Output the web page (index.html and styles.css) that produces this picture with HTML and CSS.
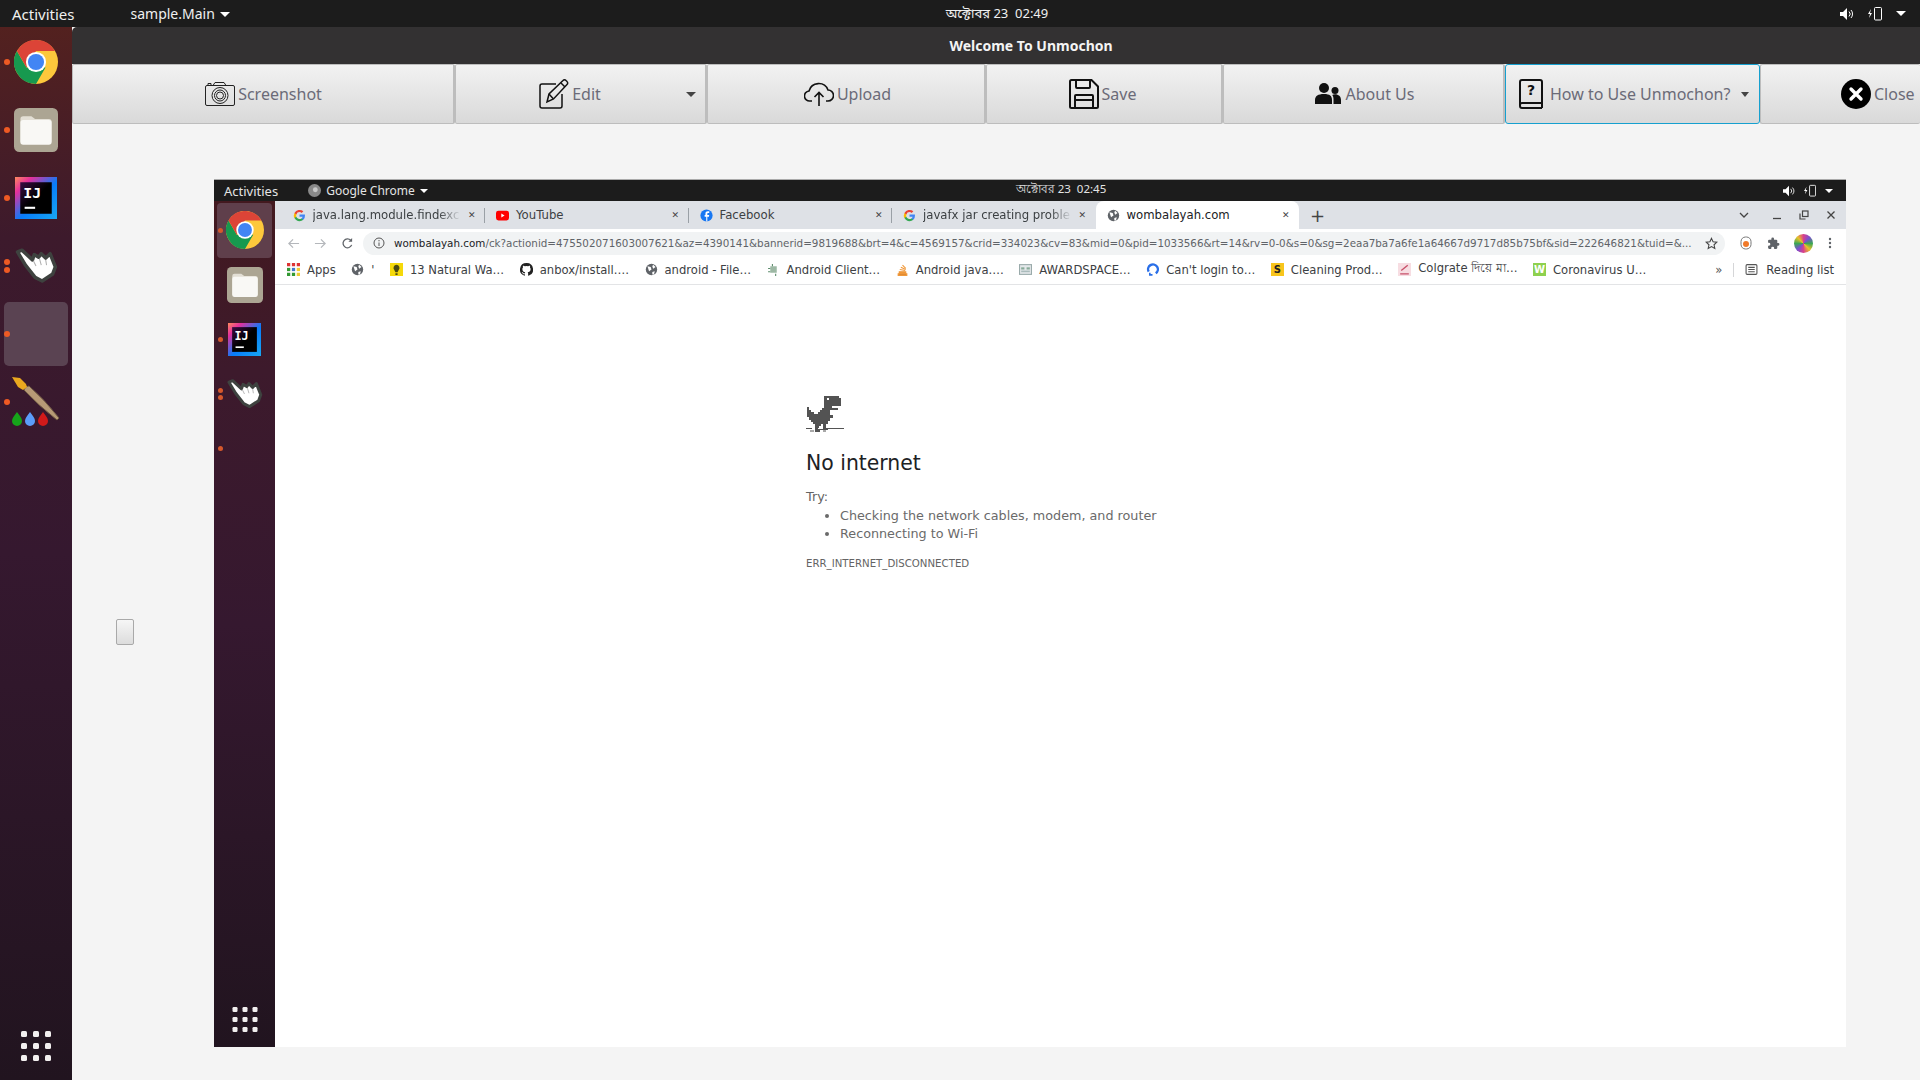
FILE: index.html
```html
<!DOCTYPE html>
<html lang="en">
<head>
    <meta charset="UTF-8">
    <title>Welcome To Unmochon</title>
    <link rel="stylesheet" href="styles.css">
</head>
<body>

<svg class="defs" width="0" height="0">
    <defs>
        <symbol id="chrome" viewBox="0 0 48 48">
            <circle cx="24" cy="24" r="24" fill="#fdc83c"/>
            <path d="M3.2 12 13.600 30H34.400L24 48A24 24 0 0 1 3.200 12Z" fill="#17994f"/>
            <path d="M3.200 12A24 24 0 0 1 44.800 12H24L13.600 30Z" fill="#dc4437"/>
            <circle cx="24" cy="24" r="11" fill="#fff"/>
            <circle cx="24" cy="24" r="8.800" fill="#4285f4"/>
        </symbol>
        <symbol id="files" viewBox="0 0 48 48">
            <rect width="48" height="48" rx="6" fill="#aca593"/>
            <path d="M7 12a3 3 0 0 1 3-3h9l4 3h15a3 3 0 0 1 3 3v21a3 3 0 0 1-3 3H10a3 3 0 0 1-3-3Z" fill="#e3dfd5"/>
            <path d="M7 16a3 3 0 0 1 3-3h28a3 3 0 0 1 3 3v21a3 3 0 0 1-3 3H10a3 3 0 0 1-3-3Z" fill="#f9f8f5"/>
        </symbol>
        <symbol id="idea" viewBox="0 0 48 48">
            <defs>
                <linearGradient id="ideaEdge" x1="0" y1="0" x2="1" y2="1">
                    <stop offset="0" stop-color="#fe8a5d"/>
                    <stop offset=".2" stop-color="#e5309c"/>
                    <stop offset=".55" stop-color="#087cfa"/>
                    <stop offset="1" stop-color="#18a8f2"/>
                </linearGradient>
                <linearGradient id="ideaCore" x1="0" y1="0" x2="1" y2="1">
                    <stop offset="0" stop-color="#3a0b44"/>
                    <stop offset=".5" stop-color="#000"/>
                </linearGradient>
            </defs>
            <rect width="48" height="48" fill="url(#ideaEdge)"/>
            <rect x="6" y="6" width="36" height="36" fill="url(#ideaCore)"/>
            <text x="9.500" y="24" class="ij-text">IJ</text>
            <rect x="11" y="34" width="12" height="2.400" fill="#fff"/>
        </symbol>
        <symbol id="hand" viewBox="0 0 50 42">
            <path d="M4 5 9 3 21 14 23 8 28 11 31 7 36 12 41 7 47 22 44 30 32 38 24 34 13 20Z" fill="#fff" stroke="#3e423f" stroke-width="4" stroke-linejoin="round"/>
            <path d="M22 15 25 21M29 13 31 20M36 14 37 20" stroke="#b0b0b0" stroke-width="1.200" fill="none"/>
        </symbol>
        <symbol id="globe" viewBox="0 0 16 16">
            <circle cx="8" cy="8" r="7" fill="#5f6368"/>
            <path d="M3 4 7 5 8 8 5 10 4 7ZM10 2 13 5 10 7 9 4ZM9 11 12 10 11 14 9 14Z" fill="#fff"/>
        </symbol>
        <symbol id="g-logo" viewBox="0 0 16 16">
            <path d="M14.700 8.200c0-.5 0-1-.1-1.400H8v2.700h3.800a3.200 3.200 0 0 1-1.400 2.100v1.700h2.300a6.800 6.800 0 0 0 2-5.100Z" fill="#4285f4"/>
            <path d="M8 15c1.900 0 3.400-.6 4.700-1.700l-2.300-1.700a4.200 4.200 0 0 1-6.300-2.200H1.800v1.800A7 7 0 0 0 8 15Z" fill="#34a853"/>
            <path d="M4.100 9.400a4.200 4.200 0 0 1 0-2.700V4.900H1.800a7 7 0 0 0 0 6.300Z" fill="#fbbc05"/>
            <path d="M8 3.800c1 0 2 .4 2.700 1.100l2-2A7 7 0 0 0 1.800 4.900l2.300 1.800A4.200 4.200 0 0 1 8 3.800Z" fill="#ea4335"/>
        </symbol>
    </defs>
</svg>

<div class="topbar">
    <div class="topbar-left">
        <span class="activities">Activities</span>
        <span class="app-menu">sample.Main <i class="caret"></i></span>
    </div>
    <div class="clock">অক্টোবর 23&nbsp; 02:49</div>
    <div class="tray">
        <svg width="14" height="14" viewBox="0 0 14 14"><path d="M0 5h3l4-4v12L3 9H0Z" fill="#fff"/><path d="M9 4.500a3.500 3.500 0 0 1 0 5M11 3a6 6 0 0 1 0 8" stroke="#fff" fill="none"/></svg>
        <svg width="14" height="15" viewBox="0 0 14 15"><path d="M3 3 0 8h2l-1 4 3-5H2Z" fill="#fff"/><rect x="6.500" y="1.500" width="7" height="12.500" rx="1" fill="none" stroke="#fff"/></svg>
        <i class="caret"></i>
    </div>
</div>

<div class="desktop">
    <nav class="dock">
        <div class="dock-item"><i class="dot"></i><svg class="dock-icon"><use href="#chrome"/></svg></div>
        <div class="dock-item"><i class="dot"></i><svg class="dock-icon"><use href="#files"/></svg></div>
        <div class="dock-item"><i class="dot"></i><svg class="dock-icon idea-icon"><use href="#idea"/></svg></div>
        <div class="dock-item"><i class="dot double"></i><svg class="dock-icon"><use href="#hand"/></svg></div>
        <div class="dock-item"><i class="dot"></i><div class="dock-active"></div></div>
        <div class="dock-item"><i class="dot"></i>
            <svg class="dock-icon paint" viewBox="0 0 48 50">
                <path d="M12 13Q13 9 17 9 32 22 47 41L45 43Q26 28 12 13Z" fill="#b79a76" stroke="#6f5a43"/>
                <path d="M0 0 8 1 14 7 15 10 11 13 6 10Z" fill="#eaa81f"/>
                <path d="M5 35c3 4 5 6 5 9a5 5 0 0 1-10 0c0-3 2-5 5-9Z" fill="#16a31a"/>
                <path d="M18 35c3 4 5 6 5 9a5 5 0 0 1-10 0c0-3 2-5 5-9Z" fill="#5b9dfa"/>
                <path d="M31 35c3 4 5 6 5 9a5 5 0 0 1-10 0c0-3 2-5 5-9Z" fill="#d11a1a"/>
            </svg>
        </div>
        <div class="dock-spacer"></div>
        <svg class="apps-grid" viewBox="0 0 30 30"><g fill="#f2efef">
            <rect x="0" y="0" width="6" height="6" rx="1.500"/><rect x="12" y="0" width="6" height="6" rx="1.500"/><rect x="24" y="0" width="6" height="6" rx="1.500"/>
            <rect x="0" y="12" width="6" height="6" rx="1.500"/><rect x="12" y="12" width="6" height="6" rx="1.500"/><rect x="24" y="12" width="6" height="6" rx="1.500"/>
            <rect x="0" y="24" width="6" height="6" rx="1.500"/><rect x="12" y="24" width="6" height="6" rx="1.500"/><rect x="24" y="24" width="6" height="6" rx="1.500"/>
        </g></svg>
    </nav>

    <main class="window">
        <div class="titlebar">Welcome To Unmochon</div>

        <div class="toolbar">
            <button class="tool tool-shot">
                <svg width="30" height="24" viewBox="0 0 30 24" fill="none" stroke="#222" stroke-width="1"><rect x=".5" y="3.500" width="29" height="20" rx="1.500"/><path d="M8 3.500 10 .5h9l2 3"/><circle cx="15" cy="13.500" r="8"/><circle cx="15" cy="13.500" r="5.500"/><circle cx="15" cy="13.500" r="3.500"/><path d="M3 1.500h3v2H3Z"/></svg>
                Screenshot
            </button>
            <button class="tool tool-edit">
                <svg width="30" height="30" viewBox="0 0 30 30" fill="none" stroke="#111" stroke-width="1.500"><path d="M17 5H3a2 2 0 0 0-2 2v20a2 2 0 0 0 2 2h18a2 2 0 0 0 2-2V15"/><path d="M8 23 10 15 24 1.500a2 2 0 0 1 3 0l1 1a2 2 0 0 1 0 3L14.500 20Z"/><path d="M10 15 14.500 20M22 4l4 4"/></svg>
                Edit
                <i class="caret dark edge"></i>
            </button>
            <button class="tool tool-upload">
                <svg width="30" height="26" viewBox="0 0 30 26" fill="none" stroke="#111" stroke-width="1.600"><path d="M8 20H6a5 5 0 0 1-1-10A10 10 0 0 1 24 9a5.500 5.500 0 0 1 0 11h-2"/><path d="M15 25V12M10.500 16 15 11.500 19.500 16"/></svg>
                Upload
            </button>
            <button class="tool tool-save">
                <svg width="30" height="30" viewBox="0 0 30 30" fill="none" stroke="#111" stroke-width="2"><path d="M2.500 1h20L29 7.500v20a1.500 1.500 0 0 1-1.500 1.500h-25A1.500 1.500 0 0 1 1 27.500v-25A1.500 1.500 0 0 1 2.500 1Z"/><path d="M7 1v7a1 1 0 0 0 1 1h12a1 1 0 0 0 1-1V1"/><path d="M6 29V17a1 1 0 0 1 1-1h16a1 1 0 0 1 1 1v12M6 21h18"/></svg>
                Save
            </button>
            <button class="tool tool-about">
                <svg width="26" height="22" viewBox="0 0 26 22" fill="#111"><circle cx="9" cy="5" r="5"/><circle cx="20" cy="7.500" r="3.500"/><path d="M0 21v-4c0-4 3-6 9-6s8 2 8 6v4ZM18.500 21v-5c0-1.500-.4-3-1.300-4 .8-.5 1.800-.7 2.800-.7 3.500 0 6 2.200 6 5.700v4Z"/></svg>
                About Us
            </button>
            <button class="tool tool-help">
                <svg width="24" height="30" viewBox="0 0 24 30" fill="none" stroke="#111" stroke-width="2"><path d="M23 24V3a2 2 0 0 0-2-2H3a2 2 0 0 0-2 2v24a2 2 0 0 0 2 2h20"/><path d="M1 26a2 2 0 0 1 2-2h20v5"/><text x="8" y="16" class="help-mark">?</text></svg>
                How to Use Unmochon?
                <i class="caret dark"></i>
            </button>
            <button class="tool tool-close">
                <svg width="30" height="30" viewBox="0 0 30 30"><circle cx="15" cy="15" r="15" fill="#000"/><path d="M10 10 20 20M20 10 10 20" stroke="#fff" stroke-width="3.400" stroke-linecap="round"/></svg>
                Close
            </button>
        </div>

        <div class="canvas">
            <div class="handle"></div>

            <div class="shot">
                <div class="shot-topbar">
                    <div class="shot-left">
                        <span class="shot-activities">Activities</span>
                        <span class="shot-app"><svg width="13" height="13" viewBox="0 0 16 16"><circle cx="8" cy="8" r="8" fill="#8a8a8a"/><circle cx="9" cy="7" r="3" fill="#c9c9c9"/></svg> Google Chrome <i class="caret small"></i></span>
                    </div>
                    <div class="shot-clock">অক্টোবর 23&nbsp; 02:45</div>
                    <div class="tray small">
                        <svg width="12" height="12" viewBox="0 0 14 14"><path d="M0 5h3l4-4v12L3 9H0Z" fill="#fff"/><path d="M9 4.500a3.500 3.500 0 0 1 0 5M11 3a6 6 0 0 1 0 8" stroke="#fff" fill="none"/></svg>
                        <svg width="12" height="13" viewBox="0 0 14 15"><path d="M3 3 0 8h2l-1 4 3-5H2Z" fill="#fff"/><rect x="6.500" y="1.500" width="7" height="12.500" rx="1" fill="none" stroke="#fff"/></svg>
                        <i class="caret small"></i>
                    </div>
                </div>

                <div class="shot-body">
                    <nav class="shot-dock">
                        <div class="shot-dock-item current"><i class="dot mini"></i><svg class="shot-icon"><use href="#chrome"/></svg></div>
                        <div class="shot-dock-item"><svg class="shot-icon files-small"><use href="#files"/></svg></div>
                        <div class="shot-dock-item"><i class="dot mini"></i><svg class="shot-icon idea-small"><use href="#idea"/></svg></div>
                        <div class="shot-dock-item"><i class="dot mini double"></i><svg class="shot-icon hand-small"><use href="#hand"/></svg></div>
                        <div class="shot-dock-item"><i class="dot mini"></i></div>
                        <div class="dock-spacer"></div>
                        <svg class="apps-grid small" viewBox="0 0 30 30"><g fill="#f2efef">
                            <rect x="0" y="0" width="6" height="6" rx="1.500"/><rect x="12" y="0" width="6" height="6" rx="1.500"/><rect x="24" y="0" width="6" height="6" rx="1.500"/>
                            <rect x="0" y="12" width="6" height="6" rx="1.500"/><rect x="12" y="12" width="6" height="6" rx="1.500"/><rect x="24" y="12" width="6" height="6" rx="1.500"/>
                            <rect x="0" y="24" width="6" height="6" rx="1.500"/><rect x="12" y="24" width="6" height="6" rx="1.500"/><rect x="24" y="24" width="6" height="6" rx="1.500"/>
                        </g></svg>
                    </nav>

                    <div class="browser">
                        <div class="tabs">
                            <div class="tab"><svg class="fav"><use href="#g-logo"/></svg><span class="tab-title fade">java.lang.module.findexc</span><span class="tab-x">✕</span></div>
                            <div class="tab"><svg class="fav" viewBox="0 0 16 16"><rect y="2" width="16" height="12" rx="3" fill="#f00"/><path d="M6.500 5.500v5l4-2.500Z" fill="#fff"/></svg><span class="tab-title">YouTube</span><span class="tab-x">✕</span></div>
                            <div class="tab"><svg class="fav" viewBox="0 0 16 16"><circle cx="8" cy="8" r="7.500" fill="#1877f2"/><path d="M9 15.500V9.500h2l.3-2.200H9V6c0-.7.3-1.200 1.300-1.200h1.100V2.900c-.4 0-1-.1-1.700-.1-1.800 0-3 1-3 3v1.500H5.700v2.200h2v6Z" fill="#fff"/></svg><span class="tab-title">Facebook</span><span class="tab-x">✕</span></div>
                            <div class="tab no-sep"><svg class="fav"><use href="#g-logo"/></svg><span class="tab-title fade">javafx jar creating proble</span><span class="tab-x">✕</span></div>
                            <div class="tab active"><svg class="fav"><use href="#globe"/></svg><span class="tab-title">wombalayah.com</span><span class="tab-x">✕</span></div>
                            <span class="new-tab">+</span>
                            <div class="win-controls">
                                <svg class="tab-search" width="10" height="6" viewBox="0 0 10 6"><path d="M1 1 5 5 9 1" fill="none" stroke="#444" stroke-width="1.300"/></svg>
                                <svg width="10" height="10" viewBox="0 0 10 10"><path d="M1 8.500h8" stroke="#444" stroke-width="1.300"/></svg>
                                <svg width="10" height="10" viewBox="0 0 10 10" fill="none" stroke="#444" stroke-width="1.200"><rect x="3.500" y="1" width="5.500" height="5.500"/><path d="M1 3.500V9h5.500"/></svg>
                                <svg width="10" height="10" viewBox="0 0 10 10"><path d="M1.500 1.500 8.500 8.500M8.500 1.500 1.500 8.500" stroke="#444" stroke-width="1.300"/></svg>
                            </div>
                        </div>

                        <div class="addressbar">
                            <svg class="nav-icon" viewBox="0 0 14 14" fill="none" stroke="#b4b7bb" stroke-width="1.300"><path d="M13 7H2M6.500 2.500 2 7l4.500 4.500"/></svg>
                            <svg class="nav-icon" viewBox="0 0 14 14" fill="none" stroke="#b4b7bb" stroke-width="1.300"><path d="M1 7h11M7.500 2.500 12 7l-4.500 4.500"/></svg>
                            <svg class="nav-icon" viewBox="0 0 14 14" fill="none" stroke="#5f6368" stroke-width="1.400"><path d="M11.500 8.500A4.800 4.800 0 1 1 10.500 3.500"/><path d="M12 1v4H8" fill="#5f6368" stroke="none"/></svg>
                            <div class="omnibox">
                                <svg width="12" height="12" viewBox="0 0 12 12" fill="none" stroke="#555"><circle cx="6" cy="6" r="5"/><path d="M6 5.500v3.500M6 3v1.300"/></svg>
                                <span class="url"><b>wombalayah.com</b>/ck?actionid=475502071603007621&amp;az=4390141&amp;bannerid=9819688&amp;brt=4&amp;c=4569157&amp;crid=334023&amp;cv=83&amp;mid=0&amp;pid=1033566&amp;rt=14&amp;rv=0-0&amp;s=0&amp;sg=2eaa7ba7a6fe1a64667d9717d85b75bf&amp;sid=222646821&amp;tuid=&amp;...</span>
                                <svg width="13" height="13" viewBox="0 0 24 24" fill="none" stroke="#444" stroke-width="2"><path d="m12 2.500 2.900 6.300 6.900.8-5.100 4.700 1.400 6.800L12 17.600l-6.100 3.500 1.400-6.800L2.200 9.600l6.900-.8Z"/></svg>
                            </div>
                            <div class="ext-icons">
                                <svg width="12" height="14" viewBox="0 0 12 14"><rect x="1" y="1" width="10" height="12" rx="4.500" fill="#fff" stroke="#777"/><circle cx="6" cy="8" r="3" fill="#f07a2a"/></svg>
                                <svg width="13" height="13" viewBox="0 0 24 24" fill="#5f6368"><path d="M20.500 11H19V7a2 2 0 0 0-2-2h-4V3.500a2.500 2.500 0 0 0-5 0V5H4a2 2 0 0 0-2 2v3.800h1.500a2.700 2.700 0 0 1 0 5.400H2V20a2 2 0 0 0 2 2h3.800v-1.500a2.700 2.700 0 0 1 5.400 0V22H17a2 2 0 0 0 2-2v-4h1.500a2.500 2.500 0 0 0 0-5Z"/></svg>
                                <span class="avatar"></span>
                                <svg width="4" height="12" viewBox="0 0 4 12" fill="#5f6368"><circle cx="2" cy="2" r="1.200"/><circle cx="2" cy="6" r="1.200"/><circle cx="2" cy="10" r="1.200"/></svg>
                            </div>
                        </div>

                        <div class="bookmarks">
                            <div class="bm"><svg class="bm-icon" viewBox="0 0 12 12"><g><rect width="3" height="3" fill="#d33"/><rect x="4.500" width="3" height="3" fill="#d33"/><rect x="9" width="3" height="3" fill="#d33"/><rect y="4.500" width="3" height="3" fill="#393"/><rect x="4.500" y="4.500" width="3" height="3" fill="#47c"/><rect x="9" y="4.500" width="3" height="3" fill="#ec3"/><rect y="9" width="3" height="3" fill="#393"/><rect x="4.500" y="9" width="3" height="3" fill="#393"/><rect x="9" y="9" width="3" height="3" fill="#ec3"/></g></svg>Apps</div>
                            <div class="bm"><svg class="bm-icon"><use href="#globe"/></svg>'</div>
                            <div class="bm"><svg class="bm-icon" viewBox="0 0 12 12"><rect width="12" height="12" fill="#f5d90a"/><path d="M6 1.500a3 3 0 0 0-2 5l1 2h2l1-2a3 3 0 0 0-2-5ZM5 9.500h2V11H5Z" fill="#4a4a10"/></svg>13 Natural Wa…</div>
                            <div class="bm"><svg class="bm-icon" viewBox="0 0 16 16"><path d="M8 0a8 8 0 0 0-2.500 15.600c.4.100.5-.2.500-.4v-1.400c-2.200.5-2.700-1-2.700-1-.4-.9-.9-1.200-.9-1.200-.7-.5.100-.5.100-.5.800.100 1.200.8 1.200.8.700 1.200 1.900.9 2.300.7.100-.5.300-.9.500-1.100-1.800-.2-3.600-.9-3.600-4a3.100 3.100 0 0 1 .8-2.100c-.1-.2-.4-1 .1-2.100 0 0 .7-.2 2.200.8a7.600 7.600 0 0 1 4 0c1.500-1 2.200-.8 2.200-.8.400 1.100.2 1.900.1 2.100.5.600.8 1.300.8 2.100 0 3.100-1.900 3.800-3.700 4 .3.300.6.800.6 1.500v2.200c0 .2.100.5.600.4A8 8 0 0 0 8 0Z" fill="#222"/></svg>anbox/install.…</div>
                            <div class="bm"><svg class="bm-icon"><use href="#globe"/></svg>android - File…</div>
                            <div class="bm"><svg class="bm-icon" viewBox="0 0 12 12"><path d="M3 3h6v6H3Z" fill="#9db8a4"/><path d="M1 5h2M1 8h2M5 1v2M8 10v2" stroke="#5a8a6a"/></svg>Android Client…</div>
                            <div class="bm"><svg class="bm-icon" viewBox="0 0 12 12"><path d="M2 10h8v1.500H2ZM3 8h6v1H3ZM3.500 6l5 1M4.500 4l4.500 2M6 2l3 3" stroke="#f0983a" fill="#d08030" stroke-width="1"/></svg>Android java.…</div>
                            <div class="bm"><svg class="bm-icon" viewBox="0 0 12 12"><rect x=".5" y="1.500" width="11" height="9" fill="#e4e8ea" stroke="#9aa"/><rect x="2" y="4" width="3" height="2" fill="#8a9"/><rect x="7" y="4" width="3" height="2" fill="#8a9"/><rect x="2" y="7" width="8" height="1.500" fill="#abb"/></svg>AWARDSPACE…</div>
                            <div class="bm"><svg class="bm-icon" viewBox="0 0 12 12" fill="none"><path d="M2.500 8A4.500 4.500 0 1 1 9 9.500" stroke="#2a6fe8" stroke-width="2.200"/><path d="M6 11H3.500V9" stroke="#2a6fe8" stroke-width="1.500"/></svg>Can't login to…</div>
                            <div class="bm"><span class="bm-badge badge-s">S</span>Cleaning Prod…</div>
                            <div class="bm"><svg class="bm-icon" viewBox="0 0 12 12"><rect width="12" height="12" fill="#f7dde2"/><path d="M3 7 9 2M2 10h8" stroke="#c8516a" stroke-width="1.300"/></svg>Colgrate দিয়ে মা…</div>
                            <div class="bm"><span class="bm-badge badge-w">W</span>Coronavirus U…</div>
                            <div class="bm-end">
                                <span class="bm-more">»</span>
                                <span class="bm-sep"></span>
                                <svg class="bm-icon" viewBox="0 0 12 12" fill="none" stroke="#555"><rect x="1" y="1.500" width="10" height="9" rx="1"/><path d="M3 4h6M3 6h6M3 8h6"/></svg>
                                <span>Reading list</span>
                            </div>
                        </div>

                        <div class="page">
                            <div class="error">
                                <svg class="dino" width="38" height="36" viewBox="0 0 38 36">
                                    <path fill="#535353" d="M18 0h15v2h2v8H26v2h6v2H24v5h3v3h-3v3h-2v3h-2v4h2v2h-5v-6h-2v2h-2v2h-1v2h2v2H9v-8H7v-2H5v-2H3v-3H1V11h2v3h2v2h3v2h4v-2h2v-2h2v-2h2Z"/>
                                    <rect x="21" y="2" width="2" height="2" fill="#fff"/>
                                    <path d="M0 32.500h6M12 33.500h6M21 32.500h17M4 35h4M17 35h3" stroke="#535353" stroke-width="1" fill="none"/>
                                </svg>
                                <h1>No internet</h1>
                                <p class="try">Try:</p>
                                <ul>
                                    <li>Checking the network cables, modem, and router</li>
                                    <li>Reconnecting to Wi-Fi</li>
                                </ul>
                                <p class="err-code">ERR_INTERNET_DISCONNECTED</p>
                            </div>
                        </div>
                    </div>
                </div>
            </div>
        </div>
    </main>
</div>

</body>
</html>
```

FILE: styles.css
```css
* {
    box-sizing: border-box;
}

html, body {
    margin: 0;
    height: 100%;
    overflow: hidden;
}

body {
    width: 1920px;
    height: 1080px;
    display: flex;
    flex-direction: column;
    font-family: "Noto Sans", "Noto Sans Bengali", "DejaVu Sans", sans-serif;
    background-color: #f4f4f4;
}

.defs {
    position: absolute;
}

.ij-text {
    font-family: "DejaVu Sans Mono", monospace;
    font-weight: bold;
    font-size: 17px;
    fill: #fff;
}

.help-mark {
    font-family: "DejaVu Sans", sans-serif;
    font-weight: bold;
    font-size: 14px;
    fill: #111;
    stroke: none;
}

.caret {
    display: inline-block;
    width: 0;
    height: 0;
    border-left: 5px solid transparent;
    border-right: 5px solid transparent;
    border-top: 5px solid #fff;
}

.caret.small {
    border-left-width: 4px;
    border-right-width: 4px;
    border-top-width: 4px;
}

.caret.dark {
    border-top-color: #444;
}

/* desktop top bar */
.topbar {
    height: 27px;
    flex-shrink: 0;
    background-color: #1c1c1c;
    color: #f0f0f0;
    font-size: 14px;
    display: grid;
    grid-template-columns: 1fr auto 1fr;
    align-items: center;
    padding: 0 14px 0 12px;
}

.topbar-left {
    display: flex;
    align-items: center;
    gap: 56px;
}

.activities {
    font-size: 15px;
}

.app-menu .caret {
    margin-left: 2px;
    vertical-align: 2px;
}

.clock {
    font-size: 13px;
    margin-left: 76px;
}

.tray {
    display: flex;
    justify-content: flex-end;
    align-items: center;
    gap: 14px;
}

.tray.small {
    gap: 9px;
}

.desktop {
    flex: 1;
    display: flex;
    min-height: 0;
}

/* launcher */
.dock {
    width: 72px;
    flex-shrink: 0;
    padding: 1px 0 19px;
    display: flex;
    flex-direction: column;
    align-items: center;
    background: linear-gradient(180deg, #53211f 0, #3d1a2c 20%, #35182f 50%, #21141f 100%);
}

.dock-item {
    width: 72px;
    height: 68px;
    display: flex;
    align-items: center;
    justify-content: center;
    position: relative;
}

.dock-icon {
    width: 44px;
    height: 44px;
    display: block;
}

.idea-icon {
    height: 42px;
    width: 42px;
}

.paint {
    width: 50px;
    height: 50px;
}

.dock-active {
    width: 64px;
    height: 64px;
    background-color: #5a4352;
    border-radius: 5px;
}

.dot {
    position: absolute;
    left: 4px;
    top: 50%;
    width: 6px;
    height: 6px;
    margin-top: -3px;
    background-color: #ee5a24;
    border-radius: 50%;
}

.dot.double {
    box-shadow: 0 8px 0 #ee5a24;
    margin-top: -7px;
}

.dot.mini {
    left: 4px;
    width: 5px;
    height: 5px;
    margin-top: -2px;
    background-color: #d5582c;
}

.dot.mini.double {
    box-shadow: 0 7px 0 #d5582c;
    margin-top: -6px;
}

.dock-spacer {
    flex: 1;
}

.apps-grid {
    width: 30px;
    height: 30px;
    display: block;
}

.apps-grid.small {
    width: 26px;
    height: 25px;
}

/* app window */
.window {
    flex: 1;
    min-width: 0;
    display: flex;
    flex-direction: column;
}

.titlebar {
    height: 37px;
    flex-shrink: 0;
    background-color: #333132;
    color: #f4f4f4;
    font-size: 14px;
    font-weight: bold;
    font-family: "Noto Sans", sans-serif;
    display: flex;
    align-items: center;
    justify-content: center;
    padding-left: 70px;
    border-top-left-radius: 5px;
}

.toolbar {
    height: 60px;
    flex-shrink: 0;
    display: flex;
}

.tool {
    flex-shrink: 0;
    height: 60px;
    display: flex;
    align-items: center;
    justify-content: center;
    gap: 3px;
    position: relative;
    padding: 0;
    border: 1px solid #bdbdbd;
    border-right-width: 2px;
    border-radius: 2px;
    background: linear-gradient(180deg, #f2f2f2 0, #d9d9d9 100%);
    color: #6b6b78;
    font-family: "Noto Sans", sans-serif;
    font-size: 16px;
}

.tool-shot { width: 383px; padding-left: 1px; }
.tool-edit { width: 252px; padding-right: 21px; }
.tool-upload { width: 279px; padding-left: 3px; }
.tool-save { width: 237px; padding-right: 3px; }
.tool-about { width: 282px; padding-left: 2px; gap: 5px; }

.tool-help {
    width: 255px;
    justify-content: flex-start;
    gap: 7px;
    padding-left: 13px;
    border: 1.5px solid #16a0cf;
    border-radius: 3px;
}

.tool-help .caret {
    margin-left: 4px;
    border-left-width: 4.5px;
    border-right-width: 4.5px;
}

.tool-close {
    flex: 1;
    border-right: none;
    justify-content: flex-start;
    padding-left: 80px;
    min-width: 0;
    white-space: nowrap;
}

.caret.edge {
    position: absolute;
    right: 9px;
    top: 27px;
}

.canvas {
    flex: 1;
    min-height: 0;
    padding: 55px 0 0 142px;
    position: relative;
    background-color: #f4f4f4;
}

.handle {
    position: absolute;
    left: 44px;
    top: 495px;
    width: 18px;
    height: 26px;
    background: linear-gradient(180deg, #f6f6f6, #dcdcdc);
    border: 1px solid #a9a9a9;
    border-radius: 2px;
}

/* the screenshot inside the canvas */
.shot {
    width: 1632px;
    height: 868px;
    display: flex;
    flex-direction: column;
    border-top: 1px solid #aaa;
    font-family: "DejaVu Sans", sans-serif;
}

.shot-topbar {
    height: 21px;
    flex-shrink: 0;
    background-color: #1c1c1c;
    color: #e4e4e4;
    font-size: 12px;
    font-family: "Noto Sans", sans-serif;
    display: grid;
    grid-template-columns: 1fr auto 1fr;
    align-items: center;
    padding: 0 13px 0 10px;
}

.shot-left {
    display: flex;
    align-items: center;
    gap: 30px;
}

.shot-activities {
    font-size: 13px;
}

.shot-app {
    display: flex;
    align-items: center;
    gap: 5px;
}

.shot-clock {
    font-size: 11.5px;
    margin-right: 2px;
    margin-left: 67px;
}

.shot-body {
    flex: 1;
    display: flex;
    min-height: 0;
}

.shot-dock {
    width: 61px;
    flex-shrink: 0;
    padding: 2px 0 15px;
    display: flex;
    flex-direction: column;
    align-items: center;
    background: linear-gradient(180deg, #43191f 0, #3d1a2c 20%, #35182f 50%, #21141f 100%);
}

.shot-dock-item {
    width: 55px;
    height: 54.5px;
    display: flex;
    align-items: center;
    justify-content: center;
    position: relative;
}

.shot-dock-item.current {
    background-color: #5f3f4b;
    border-radius: 4px;
}

.shot-dock-item .dot.mini {
    left: 1px;
}

.shot-icon {
    width: 38px;
    height: 38px;
    display: block;
}

.files-small {
    width: 36px;
    height: 36px;
}

.idea-small {
    width: 35px;
    height: 33px;
}

.hand-small {
    width: 37px;
    height: 32px;
}

.browser {
    flex: 1;
    min-width: 0;
    display: flex;
    flex-direction: column;
    background-color: #fff;
}

.tabs {
    height: 28px;
    flex-shrink: 0;
    background-color: #dee1e6;
    display: flex;
    align-items: center;
    padding-left: 6.5px;
    font-size: 11.7px;
    color: #3c4043;
}

.tab {
    width: 203.5px;
    height: 28px;
    display: flex;
    align-items: center;
    padding: 0 7px 0 11px;
    gap: 7px;
    position: relative;
}

.tab::after {
    content: "";
    position: absolute;
    right: 0;
    top: 7px;
    height: 15px;
    width: 1px;
    background-color: #9aa0a6;
}

.tab.no-sep::after,
.tab.active::after {
    display: none;
}

.tab.active {
    background-color: #fff;
    border-radius: 8px 8px 0 0;
    color: #202124;
}

.fav {
    width: 13px;
    height: 13px;
    flex-shrink: 0;
}

.tab-title {
    flex: 1;
    min-width: 0;
    white-space: nowrap;
}

.tab-title.fade {
    -webkit-mask-image: linear-gradient(90deg, #000 85%, transparent);
    mask-image: linear-gradient(90deg, #000 85%, transparent);
}

.tab-x {
    font-size: 9px;
    color: #444;
    width: 10px;
}

.new-tab {
    font-size: 18px;
    margin-left: 11px;
    color: #444;
}

.win-controls {
    margin-left: auto;
    display: flex;
    align-items: center;
    gap: 17px;
    padding-right: 10px;
}

.tab-search {
    margin-right: 6px;
}

.addressbar {
    height: 28px;
    flex-shrink: 0;
    display: flex;
    align-items: center;
    background-color: #fff;
    padding-left: 12px;
}

.nav-icon {
    width: 13px;
    height: 13px;
    margin-right: 14px;
    flex-shrink: 0;
}

.nav-icon:nth-child(3) {
    margin-right: 9px;
}

.omnibox {
    width: 1362px;
    height: 23px;
    flex-shrink: 0;
    border-radius: 12px;
    background-color: #f1f3f4;
    display: flex;
    align-items: center;
    padding: 0 7px 0 10px;
    gap: 9px;
}

.url {
    flex: 1;
    min-width: 0;
    font-size: 10.35px;
    color: #5f6368;
    white-space: nowrap;
}

.url b {
    font-weight: normal;
    color: #202124;
}

.ext-icons {
    display: flex;
    align-items: center;
    gap: 14.5px;
    padding-left: 15px;
}

.avatar {
    width: 19px;
    height: 19px;
    border-radius: 50%;
    background: conic-gradient(#d9408c, #7a4fd0, #3aa655, #e6c229, #d9408c, #7a4fd0, #3aa655, #e6c229, #d9408c);
    display: block;
}

.bookmarks {
    height: 28px;
    flex-shrink: 0;
    display: flex;
    align-items: center;
    gap: 15.5px;
    padding: 0 0 2px 12px;
    font-size: 11.6px;
    color: #3c4043;
    background-color: #fff;
    border-bottom: 1px solid #e3e4e6;
}

.bm {
    display: flex;
    align-items: center;
    gap: 7px;
    white-space: nowrap;
}

.bm-icon {
    width: 13px;
    height: 13px;
    flex-shrink: 0;
}

.bm-badge {
    width: 13px;
    height: 13px;
    font-size: 10px;
    font-weight: bold;
    line-height: 13px;
    text-align: center;
    flex-shrink: 0;
}

.badge-s {
    background-color: #f8c51c;
    color: #222;
}

.badge-w {
    background-color: #8ed14f;
    color: #fff;
}

.bm-end {
    margin-left: auto;
    display: flex;
    align-items: center;
    gap: 8px;
    padding-right: 12px;
}

.bm-more {
    color: #555;
    margin-right: 3px;
}

.bm-sep {
    width: 1px;
    height: 14px;
    background-color: #d5d6d8;
    margin-right: 3px;
}

/* chrome error page */
.page {
    flex: 1;
    background-color: #fff;
    padding: 111px 0 0 531px;
}

.error {
    color: #646464;
}

.dino {
    display: block;
}

.error h1 {
    margin: 18px 0 0;
    font-size: 20.4px;
    font-weight: normal;
    line-height: 26px;
    color: #202124;
}

.try {
    margin: 11px 0 0;
    font-size: 12.75px;
    line-height: 20px;
}

.error ul {
    margin: 0;
    padding-left: 34px;
    font-size: 12.75px;
    line-height: 18px;
    color: #6a6a6a;
}

.err-code {
    margin: 14px 0 0;
    font-size: 10.2px;
    line-height: 14px;
}
```
